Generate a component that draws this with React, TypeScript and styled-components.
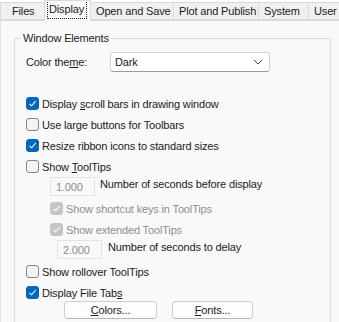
import React from 'react';
import styled, { createGlobalStyle } from 'styled-components';

const GlobalStyle = createGlobalStyle`
  html, body {
    margin: 0;
    padding: 0;
    background: #ffffff;
  }
  body {
    font-family: "Liberation Sans", Arial, sans-serif;
    font-size: 11px;
    letter-spacing: -0.15px;
    color: #1b1b1b;
    overflow: hidden;
  }
`;

const Dialog = styled.div`
  width: 339px;
  height: 322px;
  display: flex;
  flex-direction: column;
  overflow: hidden;
`;

const TabStrip = styled.div`
  display: flex;
  align-items: flex-end;
  height: 20px;
  white-space: nowrap;
  position: relative;
  z-index: 1;
`;

const Tab = styled.div<{ $active?: boolean; $w: number }>`
  flex: 0 0 ${p => p.$w}px;
  box-sizing: border-box;
  height: ${p => (p.$active ? 21 : 18)}px;
  margin-bottom: ${p => (p.$active ? -1 : 0)}px;
  margin-left: -1px;
  display: flex;
  align-items: center;
  justify-content: flex-start;
  padding-left: ${p => (p.$active ? 3 : 5)}px;
  overflow: hidden;
  border: 1px solid #d9d9d9;
  border-bottom: ${p => (p.$active ? 'none' : '1px solid #d9d9d9')};
  background: ${p => (p.$active ? '#f9f9f9' : '#f0f0f0')};
  padding-bottom: ${p => (p.$active ? 3 : 0)}px;
  &:first-child {
    margin-left: 0;
    padding-left: 11px;
  }
`;

const FocusLabel = styled.span`
  outline: 1px dotted #222;
  outline-offset: 0;
  padding: 1px 2px 2px 1px;
  line-height: 14px;
`;

const Panel = styled.div`
  flex: 1;
  background: #f9f9f9;
  border-left: 1px solid #e3e3e3;
  border-top: 1px solid #d9d9d9;
  padding: 10px 8px 0 13px;
`;

const Group = styled.fieldset`
  margin: 0;
  padding: 7px 0 0 11px;
  border: 1px solid #dcdcdc;
  border-bottom: none;
  height: 300px;
`;

const Legend = styled.legend`
  padding: 0 2px;
  margin-left: -5px;
  line-height: 14px;
`;

const ThemeRow = styled.div`
  display: flex;
  align-items: center;
  height: 20px;
  margin-bottom: 21px;
`;

const ThemeLabel = styled.span`
  width: 84px;
`;

const Select = styled.div`
  box-sizing: border-box;
  width: 160px;
  height: 20px;
  display: flex;
  align-items: center;
  justify-content: space-between;
  padding: 0 6px 0 4px;
  background: #ffffff;
  border: 1px solid #d4d4d4;
  border-bottom-color: #9c9c9c;
  border-radius: 3px;
`;

const Row = styled.div<{ $indent?: number }>`
  display: flex;
  align-items: center;
  height: 21px;
  padding-left: ${p => p.$indent ?? 0}px;
`;

const Box = styled.span<{ $checked?: boolean; $disabled?: boolean }>`
  box-sizing: border-box;
  width: 13px;
  height: 13px;
  margin-right: 3px;
  border-radius: 3px;
  display: flex;
  align-items: center;
  justify-content: center;
  flex-shrink: 0;
  background: ${p => (p.$disabled ? '#c5c5c5' : p.$checked ? '#0067c0' : '#f3f3f3')};
  border: 1px solid ${p => (p.$disabled ? '#c5c5c5' : p.$checked ? '#0067c0' : '#858585')};
`;

const Label = styled.span<{ $disabled?: boolean }>`
  color: ${p => (p.$disabled ? '#8e8e8e' : '#1b1b1b')};
`;

const NumberRow = styled.div<{ $indent: number; $gap: number }>`
  display: flex;
  align-items: flex-start;
  height: 21px;
  padding-left: ${p => p.$indent}px;
  gap: ${p => p.$gap}px;
`;

const NumberBox = styled.div`
  box-sizing: border-box;
  width: 45px;
  height: 19px;
  padding: 3px 0 0 5px;
  border: 1px solid #e3e3e3;
  background: #f9f9f9;
  color: #8c8c8c;
`;

const NumberLabel = styled.span`
  line-height: 14px;
`;

const ButtonRow = styled.div`
  display: flex;
  gap: 15px;
  padding-left: 38px;
  margin-top: -2px;
`;

const Button = styled.div<{ $w: number }>`
  box-sizing: border-box;
  width: ${p => p.$w}px;
  height: 18px;
  display: flex;
  align-items: center;
  justify-content: center;
  background: #fdfdfd;
  border: 1px solid #d0d0d0;
  border-bottom-color: #b5b5b5;
  border-radius: 4px;
`;

const Check = () => (
  <svg width="9" height="9" viewBox="0 0 9 9">
    <path d="M1.5 4.8 L3.6 6.8 L7.6 2.2" fill="none" stroke="#ffffff" strokeWidth="1.1" />
  </svg>
);

const Chevron = () => (
  <svg width="10" height="6" viewBox="0 0 10 6">
    <path d="M1 1 L5 5 L9 1" fill="none" stroke="#444" strokeWidth="1" />
  </svg>
);

interface CheckItemProps {
  checked?: boolean;
  disabled?: boolean;
  indent?: number;
  children: React.ReactNode;
}

const CheckItem: React.FC<CheckItemProps> = ({ checked, disabled, indent, children }) => (
  <Row $indent={indent}>
    <Box $checked={checked} $disabled={disabled}>
      {(checked || disabled) && <Check />}
    </Box>
    <Label $disabled={disabled}>{children}</Label>
  </Row>
);

const tabs = [
  { label: 'Files', w: 45 },
  { label: 'Display', w: 47, active: true },
  { label: 'Open and Save', w: 84 },
  { label: 'Plot and Publish', w: 86 },
  { label: 'System', w: 51 },
  { label: 'User Preferences', w: 100 },
];

export default function App() {
  return (
    <>
      <GlobalStyle />
      <Dialog>
        <TabStrip>
          {tabs.map(t => (
            <Tab key={t.label} $w={t.w} $active={t.active}>
              {t.active ? <FocusLabel>{t.label}</FocusLabel> : t.label}
            </Tab>
          ))}
        </TabStrip>
        <Panel>
          <Group>
            <Legend>Window Elements</Legend>
            <ThemeRow>
              <ThemeLabel>
                Color the<u>m</u>e:
              </ThemeLabel>
              <Select>
                <span>Dark</span>
                <Chevron />
              </Select>
            </ThemeRow>
            <CheckItem checked>
              Display <u>s</u>croll bars in drawing window
            </CheckItem>
            <CheckItem>Use large buttons for Toolbars</CheckItem>
            <CheckItem checked>Resize ribbon icons to standard sizes</CheckItem>
            <CheckItem>
              Show <u>T</u>oolTips
            </CheckItem>
            <NumberRow $indent={24} $gap={5}>
              <NumberBox>1.000</NumberBox>
              <NumberLabel>Number of seconds before display</NumberLabel>
            </NumberRow>
            <CheckItem indent={24} checked disabled>
              Show shortcut keys in ToolTips
            </CheckItem>
            <CheckItem indent={24} checked disabled>
              Show extended ToolTips
            </CheckItem>
            <NumberRow $indent={31} $gap={6}>
              <NumberBox>2.000</NumberBox>
              <NumberLabel>Number of seconds to delay</NumberLabel>
            </NumberRow>
            <CheckItem>Show rollover ToolTips</CheckItem>
            <CheckItem checked>
              Display File Tab<u>s</u>
            </CheckItem>
            <ButtonRow>
              <Button $w={93}>
                <span>
                  <u>C</u>olors...
                </span>
              </Button>
              <Button $w={81}>
                <span>
                  <u>F</u>onts...
                </span>
              </Button>
            </ButtonRow>
          </Group>
        </Panel>
      </Dialog>
    </>
  );
}
